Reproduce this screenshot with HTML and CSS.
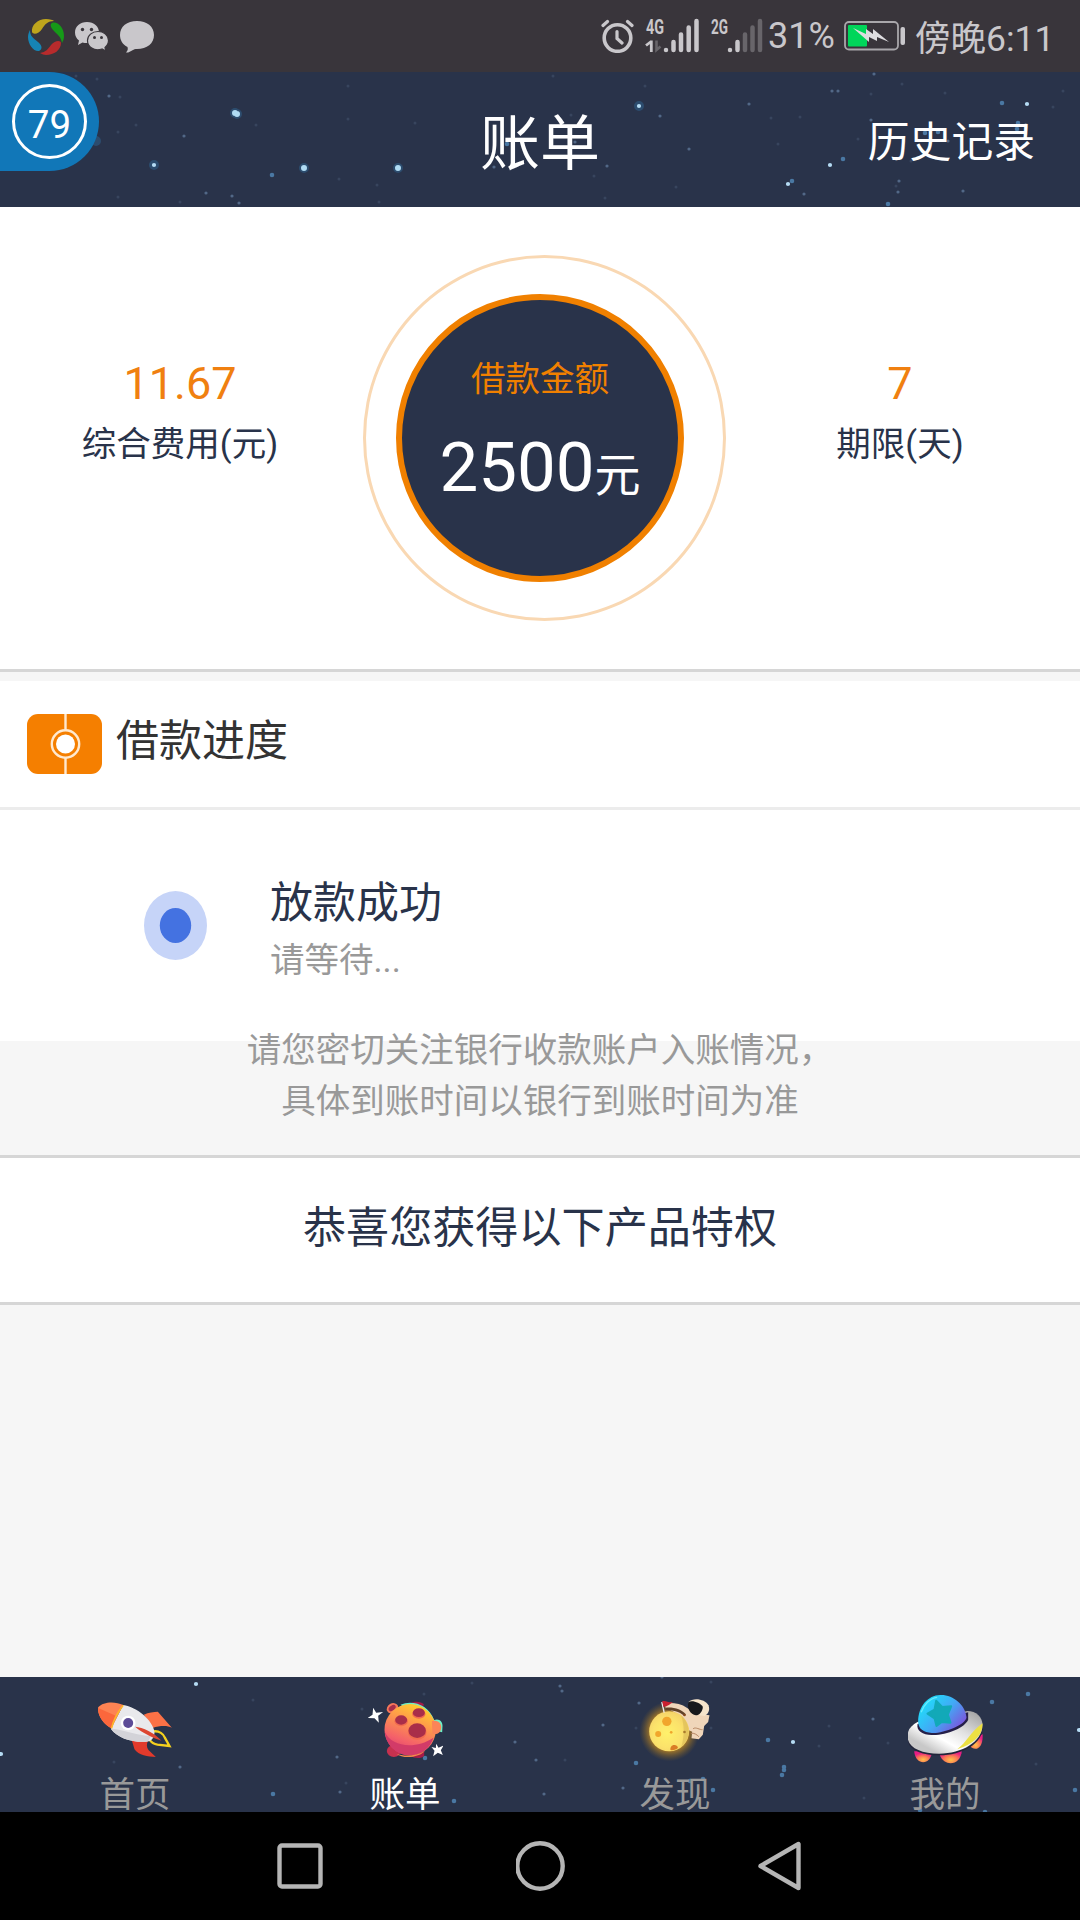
FILE: index.html
```html
<!doctype html>
<html lang="zh-CN">
<head>
  <meta charset="utf-8">
  <title>账单</title>
  <link rel="stylesheet" href="styles.css">
</head>
<body>
<div class="phone">

  <div class="status">
    <div class="status-left">
      <svg class="ico-swirl" viewBox="0 0 36 36">
        <path fill="#bfa51c" d="M4 13C3 6 10 0 18 0c4 0 7 1 8 2-6 0-9 3-12 8-3 5-9 6-10 3z"/>
        <path fill="#169a18" d="M24 4c5-2 12 4 12 13 0 3-1 5-2 7-1-6-4-8-8-12-4-4-4-7-2-8z"/>
        <path fill="#b82b2c" d="M33 24c0 7-7 12-15 12-2 0-4-1-6-2 6-1 8-4 11-8 4-5 10-5 10-2z"/>
        <path fill="#1684b4" d="M11 32C6 33 0 26 0 18c0-3 1-5 2-7 0 6 3 8 8 12 4 3 5 7 1 9z"/>
      </svg>
      <svg class="ico-wechat" viewBox="0 0 34 30">
        <path fill="#c9c7cb" d="M12 0c7 0 12 4.500 12 10.500S19 21 12 21c-2 0-3 0-4.500-.6L3 23l1-4.500C1.500 16.500 0 14 0 10.500 0 4.500 5 0 12 0z"/>
        <path fill="#c9c7cb" stroke="#39353b" stroke-width="1.200" d="M23 9.500c6 0 10.500 4 10.500 9 0 3-1.500 5.300-3.500 7l.7 3.500-3.700-2c-8 2.500-14.500-2-14.500-8.500 0-5 4.500-9 10.500-9z"/>
        <g fill="#39353b"><circle cx="7.500" cy="7.500" r="1.700"/><circle cx="16.500" cy="7.500" r="1.700"/><circle cx="19.500" cy="15.500" r="1.500"/><circle cx="26.500" cy="15.500" r="1.500"/></g>
      </svg>
      <svg class="ico-bubble" viewBox="0 0 34 32">
        <path fill="#c9c7cb" d="M17 0c10 0 17 5.500 17 14S27 28 17 28c-2 0-3 .3-4.500 1.200C10.500 30.500 8 32 6 31.500c2-2 2-3.500 1.500-5.500C2.500 23.500 0 19 0 14 0 5.500 7 0 17 0z"/>
      </svg>
    </div>
    <div class="status-right">
      <svg class="ico-alarm" viewBox="0 0 33 34">
        <g fill="none" stroke="#c9c7cb" stroke-linecap="round">
          <circle cx="16.500" cy="19" r="13.300" stroke-width="3.600"/>
          <path stroke-width="3.200" d="M2 6.500 6.500 2.500M31 6.500 26.500 2.500M16 12.500v7l5 4.500"/>
        </g>
      </svg>
      <svg class="ico-signal" viewBox="0 0 53 34">
        <text class="net" x="0" y="15" textLength="18" lengthAdjust="spacingAndGlyphs">4G</text>
        <path stroke="#c9c7cb" stroke-width="2.800" fill="none" d="M0 26.500l4.500-3.500M5.300 21.500V33"/>
        <path stroke="#68656a" stroke-width="2.600" fill="none" d="M10.500 21.500V31l4-3.500"/>
        <path class="bar" d="M20 31v0M27.500 23v8M35 15.500V31M42.700 8.500V31M50.500 2v29"/>
      </svg>
      <svg class="ico-signal" viewBox="0 0 53 34">
        <text class="net" x="0" y="15" textLength="17" lengthAdjust="spacingAndGlyphs">2G</text>
        <path class="bar" d="M19 31v0M26.500 23v8"/>
        <path class="bar off" d="M34 15.500V31M41.500 8.500V31M49 2v29"/>
      </svg>
      <span class="percent">31%</span>
      <svg class="ico-battery" viewBox="0 0 62 30">
        <rect x="1" y="1" width="53" height="27.500" rx="4" fill="none" stroke="#a9a7ab" stroke-width="1.800"/>
        <rect x="4" y="4" width="19" height="21.500" rx="1" fill="#00d65a"/>
        <path fill="#dedde0" d="M9 7l13 6 0-5 7 5 0-5 16 13-12-5 0 4-8-4 0 5z"/>
        <rect x="56.500" y="6" width="4.500" height="18" rx="2" fill="#c9c7cb"/>
      </svg>
      <span class="clock">傍晚6:11</span>
    </div>
  </div>

  <div class="header">
    <svg class="sky" viewBox="0 0 1080 135">
      <path class="star faint" d="M76 4h0M97 7h0M118 60h0M136 53h0M120 25h0M118 125h0M348 14h0M348 47h0M415 51h0M379 130h0M256 53h0M339 107h0M377 113h0M180 130h0M571 43h0M553 4h0M594 104h0M645 14h0M676 115h0M605 126h0M771 46h0M800 45h0M778 72h0M858 67h0M871 22h0M902 12h0M945 21h0M1053 35h0M1063 19h0M911 89h0M896 114h0"/>
      <path class="star dim" d="M109 24h0M184 64h0M206 121h0M232 124h0M239 131h0M660 44h0M689 77h0M607 94h0M749 32h0M832 19h0M838 19h0M874 2h0M871 48h0M948 69h0M804 122h0M899 109h0M898 120h0M963 119h0M494 95h0M575 70h0"/>
      <path class="star blue" d="M272 103h0M507 72h0M1002 31h0M1018 51h0M1017 57h0M925 61h0M938 60h0M843 87h0M792 109h0M888 132h0"/>
      <path class="star glow" d="M96 69h0M154 93h0M235 41h0M237 42h0M304 96h0M398 96h0M639 34h0"/>
      <path class="star bright" d="M154 93h0M639 34h0M1027 32h0M830 93h0M788 112h0"/>
      <path class="star big" d="M235 41h0M237 42h0M304 96h0M398 96h0"/>
    </svg>
    <div class="badge"><span class="badge-ring">79</span></div>
    <h1>账单</h1>
    <a class="history">历史记录</a>
  </div>

  <div class="summary">
    <div class="fact">
      <div class="fact-value">11.67</div>
      <div class="fact-label">综合费用(元)</div>
    </div>
    <div class="ring">
      <div class="disc">
        <div class="disc-label">借款金额</div>
        <div class="disc-amount">2500<span>元</span></div>
      </div>
    </div>
    <div class="fact">
      <div class="fact-value">7</div>
      <div class="fact-label">期限(天)</div>
    </div>
  </div>

  <div class="section-title">
    <svg class="ico-progress" viewBox="0 0 75 60">
      <rect width="75" height="60" rx="11" fill="#f57f00"/>
      <g fill="none" stroke="#ffe9cf" stroke-width="2.400"><path d="M38.500 0v16M38.500 44v16"/><circle cx="38.500" cy="30" r="13.700"/></g>
      <circle cx="38.500" cy="30" r="9.500" fill="#fff"/>
    </svg>
    <h2>借款进度</h2>
  </div>

  <div class="step">
    <svg class="dot" viewBox="0 0 63 69">
      <ellipse cx="31.500" cy="34.500" rx="31.500" ry="34.500" fill="#c6d4f8"/>
      <ellipse cx="31.500" cy="34.500" rx="15.700" ry="17.500" fill="#4472e1"/>
    </svg>
    <div class="step-text">
      <div class="step-name">放款成功</div>
      <div class="step-note">请等待...</div>
    </div>
  </div>

  <p class="notice">请您密切关注银行收款账户入账情况，<br>具体到账时间以银行到账时间为准</p>

  <div class="privilege">恭喜您获得以下产品特权</div>

  <div class="tabs">
    <svg class="sky" viewBox="0 0 1080 135">
      <path class="star faint" d="M253 23h0M472 6h0M424 17h0M362 32h0M711 5h0M711 51h0M636 51h0M819 69h0M829 49h0M860 61h0M888 66h0M864 121h0M346 106h0M565 83h0M114 85h0M1036 87h0"/>
      <path class="star dim" d="M180 90h0M560 9h0M562 14h0M515 65h0M536 83h0M544 117h0M337 80h0M340 115h0M639 26h0M623 111h0M603 48h0M873 42h0M662 0h0"/>
      <path class="star blue" d="M273 117h0M454 124h0M425 81h0M636 86h0M713 113h0M703 102h0M690 104h0M768 63h0M784 90h0M784 93h0M782 98h0M992 25h0M1028 17h0M1075 113h0M920 133h0M985 135h0"/>
      <path class="star bright" d="M196 7h0M793 65h0M1079 53h0M1 77h0"/>
    </svg>
    <div class="tab">
      <svg class="tab-icon" viewBox="112.5 66 225 225">
        <path fill="#fb7146" d="M250 134C264 127 280 125 292 125L334 173C322 167 300 166 276 174z"/>
        <path fill="#e23a2c" d="M213 208 262 213C258 224 258 232 264 240L286 261C262 260 234 256 222 238z"/>
        <path fill="none" stroke="#f4d01e" stroke-width="7" d="M280 184c16-2 29 8 33 19l14 25-36-4c-12-2-20-9-24-15"/>
        <path fill="#e9e9ec" d="M188 105c42 6 88 46 94 80 0 18-9 30-26 30-42 2-84-10-105-39z"/>
        <path fill="#d3d3d8" d="M151 176c24-1 70 18 119 22-2 10-6 17-14 17-42 2-84-10-105-39z"/>
        <path fill="#fd8353" d="M113 112c15-18 52-18 75-7l-35 70c-22-10-44-39-40-63z"/>
        <path fill="#fb673c" d="M113 114 166 137 153 175c-22-10-42-37-40-61z"/>
        <path fill="none" stroke="#fdb62b" stroke-width="5" d="M188 106c-14 18-29 43-35 69"/>
        <circle cx="203" cy="159" r="22" fill="#fff"/>
        <circle cx="203" cy="159" r="15" fill="#5d4c97"/>
        <path fill="#dd4530" d="M224 170C246 172 282 188 303 212 284 206 246 190 224 170z"/>
      </svg>
      <span>首页</span>
    </div>
    <div class="tab active">
      <svg class="tab-icon" viewBox="112.5 66 225 225">
        <defs>
          <linearGradient id="planet" x1=".75" y1="0" x2=".35" y2="1">
            <stop offset="0" stop-color="#ffd629"/><stop offset=".35" stop-color="#ff9d49"/><stop offset=".75" stop-color="#f4606a"/><stop offset="1" stop-color="#d83c6e"/>
          </linearGradient>
        </defs>
        <path fill="#a51c49" d="M240 101c8-8 32-8 40 2l-4 14zM241 258c10 8 34 8 40-1v-12z"/>
        <ellipse cx="190" cy="243" rx="21" ry="18" fill="#c6314f"/>
        <path fill="#6ef0c8" d="M210 104c36-16 84 0 101 46 14-6 25 4 25 17l-1 20-26-6z"/>
        <ellipse cx="186" cy="115" rx="18" ry="15" fill="#f5775a" transform="rotate(-30 186 115)"/>
        <ellipse cx="185" cy="114" rx="12" ry="7" fill="#a72f4a" transform="rotate(-35 185 114)"/>
        <circle cx="239" cy="179" r="77" fill="url(#planet)"/>
        <path fill="#fb8458" d="M304 153c15-4 29 4 28 20s-14 22-26 18z"/>
        <path fill="#d23b68" d="M163 186c20 44 90 54 146 17-12 34-40 54-72 53-38-1-70-30-74-70z"/>
        <path fill="#f58a4b" d="M198 251c20 8 58 9 86-9-14 18-64 28-86 9z"/>
        <g fill="#f26a50"><ellipse cx="212" cy="154" rx="20" ry="15"/><ellipse cx="265" cy="132" rx="20" ry="14"/><ellipse cx="260" cy="186" rx="28" ry="23"/></g>
        <g fill="#a92e49"><ellipse cx="212" cy="150" rx="18" ry="14"/><ellipse cx="265" cy="128" rx="18" ry="13"/><ellipse cx="260" cy="182" rx="26" ry="22"/></g>
        <path fill="#fff" d="M128 113 137 128 158 126 143 137 145 158 132 145 111 144 126 134zM317 221l7 12 15-6-8 14 6 14-15-7-14 11 4-17-9-11 13 3z"/>
      </svg>
      <span>账单</span>
    </div>
    <div class="tab">
      <svg class="tab-icon" viewBox="112.5 66 225 225">
        <defs>
          <radialGradient id="halo"><stop offset=".6" stop-color="#d0911f" stop-opacity=".85"/><stop offset="1" stop-color="#8a6520" stop-opacity="0"/></radialGradient>
          <radialGradient id="moon" cx=".45" cy=".55" r=".6"><stop offset="0" stop-color="#fff16b"/><stop offset=".6" stop-color="#fbe26b"/><stop offset="1" stop-color="#f3cf68"/></radialGradient>
        </defs>
        <circle cx="207" cy="184" r="90" fill="url(#halo)"/>
        <path fill="#f0d6ba" d="M192 100c24-2 48 0 68 14l26 16 41 6-4 20-12 12-4 26-12 14-22-3 2-20-24-10c0-30-20-48-55-60z"/>
        <path fill="#604229" d="M196 113c26-2 48 6 60 20l-4 5c-16-14-36-18-58-18z"/>
        <circle cx="206" cy="184" r="60" fill="url(#moon)"/>
        <path fill="#d9b955" opacity=".6" d="M242 136c26 24 34 66 0 96 10-32 10-64 0-96z"/>
        <path fill="#f6e4cb" d="M264 96c14-14 50-9 60 10 5 14 0 26-12 32l-22-4z"/>
        <path fill="#17181c" d="M264 96c12-6 34 2 43 14 0 14-11 26-21 26-16-3-28-20-22-40z"/>
        <path fill="none" stroke="#b78763" stroke-width="3" d="M278 176c8-6 20 4 28 3M271 190c10-2 18 4 24 10"/>
        <g fill="#f1a62c"><circle cx="199" cy="154" r="14"/><circle cx="173" cy="192" r="9"/><circle cx="212" cy="187" r="4"/></g>
        <path fill="#d97d26" d="M210 240c-2-10 6-17 13-15 7 1 10 6 9 9-6 5-13 8-22 6z"/>
        <circle cx="252" cy="186" r="4" fill="#a97a2c"/><circle cx="252" cy="135" r="4" fill="#84471f"/>
        <path stroke="#eee" stroke-width="4" d="M184 96 191 128"/>
        <path fill="#c9202f" d="M185 94c10-4 16 4 32 3-8 5-14 12-28 14z"/>
      </svg>
      <span>发现</span>
    </div>
    <div class="tab">
      <svg class="tab-icon" viewBox="202.5 66 225 225">
        <defs>
          <linearGradient id="dome" x1="0" y1=".2" x2="1" y2=".9"><stop offset="0" stop-color="#19e6fa"/><stop offset=".5" stop-color="#43a8f5"/><stop offset="1" stop-color="#8b3fd6"/></linearGradient>
          <linearGradient id="hull" x1="0" y1="1" x2="1" y2="0"><stop offset=".2" stop-color="#c8c8c8"/><stop offset=".4" stop-color="#fff"/><stop offset=".62" stop-color="#e2e2e2"/><stop offset="1" stop-color="#999"/></linearGradient>
          <radialGradient id="jet" cx=".5" cy=".75" r=".6"><stop offset="0" stop-color="#ffc24b"/><stop offset=".5" stop-color="#fb7d52"/><stop offset="1" stop-color="#e81d85"/></radialGradient>
        </defs>
        <path fill="url(#jet)" d="M221 244h54c-4 44-50 44-54 0z"/>
        <path fill="url(#jet)" d="M298 256l66-16c-2 48-52 52-66 16z"/>
        <path fill="url(#jet)" d="M384 222l42-30c4 44-24 58-42 30z"/>
        <path fill="#22253a" d="M201 204c0-38 30-54 60-54l120-27c28 0 46 22 46 48 0 50-62 85-130 85-56 0-96-18-96-52z"/>
        <path fill="url(#hull)" d="M201 198c0-20 12-32 30-42l150-33c26 0 45 18 45 42 0 50-62 86-130 86-56 0-95-19-95-53z"/>
        <path fill="#ece042" d="M426 160c2 36-28 62-76 78 28-20 38-50 76-78z"/>
        <path fill="#262049" d="M231 162c-4 22 16 32 42 33 44 2 100-22 110-46l0-22z"/>
        <path fill="url(#dome)" d="M233 156c0-48 30-80 66-81 38-2 76 30 79 67-2 24-74 50-104 47-25-2-40-12-41-33z"/>
        <path fill="none" stroke="#88f3ff" stroke-width="4" opacity=".7" d="M242 127c8-24 26-42 48-45"/>
        <path fill="#12a9b8" stroke="#12a9b8" stroke-width="6" stroke-linejoin="round" d="M287 92 305 111 332 109 322 134 330 158 304 156 288 168 282 145 261 131 282 119z"/>
      </svg>
      <span>我的</span>
    </div>
  </div>

  <div class="navbar">
    <svg viewBox="0 0 49 54"><rect x="3.500" y="4.500" width="41" height="41" rx="2.500"/></svg>
    <svg viewBox="0 0 49 54"><circle cx="24" cy="25" r="22.700"/></svg>
    <svg viewBox="0 0 49 54"><path d="M42.500 3v44L4.500 25z"/></svg>
  </div>

</div>
</body>
</html>
```
FILE: styles.css
```css
* {
  box-sizing: border-box;
}
body {
  margin: 0;
  background: #f6f6f6;
  color: #29334a;
  font-family: Roboto, "Noto Sans CJK SC", sans-serif;
}
h1, h2, p {
  margin: 0;
  font-weight: normal;
}
svg {
  display: block;
  flex: none;
}
.phone {
  width: 1080px;
  height: 1920px;
  display: flex;
  flex-direction: column;
  overflow: hidden;
}

/* system status bar */
.status {
  height: 72px;
  flex: none;
  display: flex;
  justify-content: space-between;
  background: #39353b;
  color: #c9c7cb;
}
.status-left,
.status-right {
  display: flex;
  align-items: flex-start;
}
.status-left {
  padding: 19px 0 0 28px;
}
.status-right {
  padding: 19px 27px 0 0;
}
.ico-swirl {
  width: 36px;
  height: 36px;
}
.ico-wechat {
  width: 34px;
  height: 30px;
  margin: 3px 0 0 11px;
}
.ico-bubble {
  width: 34px;
  height: 32px;
  margin: 2px 0 0 11px;
}
.ico-alarm {
  width: 33px;
  height: 34px;
}
.ico-signal {
  width: 53px;
  height: 34px;
  margin-left: 12px;
  overflow: visible;
}
.net {
  font: bold 21px Roboto, sans-serif;
  fill: #c9c7cb;
}
.bar {
  fill: none;
  stroke: #c9c7cb;
  stroke-width: 4.5px;
  stroke-linecap: round;
}
.off {
  stroke: #68656a;
}
.percent {
  width: 67px;
  margin: -3px 0 0 4px;
  font-size: 36px;
  line-height: 40px;
}
.ico-battery {
  width: 62px;
  height: 30px;
  margin: 2px 0 0 9px;
}
.clock {
  width: 138px;
  margin: -1px 0 0 9px;
  font-size: 35.5px;
  line-height: 42px;
  white-space: nowrap;
}

/* starry bars */
.header,
.tabs {
  position: relative;
  height: 135px;
  flex: none;
  background: #29334a;
}
.sky {
  position: absolute;
  left: 0;
  top: 0;
  width: 1080px;
  height: 135px;
}
.star {
  fill: none;
  stroke-linecap: round;
}
.faint {
  stroke: #38455e;
  stroke-width: 3px;
}
.dim {
  stroke: #526887;
  stroke-width: 3.2px;
}
.blue {
  stroke: #4a78a3;
  stroke-width: 4.6px;
}
.glow {
  stroke: #2f6592;
  stroke-width: 10px;
  opacity: .5;
}
.bright {
  stroke: #b5dcf4;
  stroke-width: 4.2px;
}
.big {
  stroke: #b0dcf4;
  stroke-width: 6px;
}

.header {
  display: flex;
  justify-content: center;
  color: #fff;
}
.header h1 {
  position: relative;
  font-size: 60px;
  line-height: 146px;
}
.history {
  position: absolute;
  right: 45px;
  top: 0;
  font-size: 41.8px;
  line-height: 141px;
}
.badge {
  position: absolute;
  left: 0;
  top: 0;
  width: 99px;
  height: 99px;
  padding: 12px;
  background: #1177b8;
  border-radius: 0 50px 50px 0;
}
.badge-ring {
  display: block;
  width: 75px;
  height: 75px;
  border: 3px solid #fff;
  border-radius: 50%;
  font-size: 38.5px;
  line-height: 75px;
  text-align: center;
}

/* loan summary */
.summary {
  height: 465px;
  flex: none;
  display: grid;
  grid-template-columns: 360px 360px 360px;
  background: #fff;
  border-bottom: 3px solid #d6d6d6;
}
.fact {
  padding-top: 146px;
  text-align: center;
}
.fact-value {
  color: #f08010;
  font-size: 45px;
  line-height: 61px;
}
.fact-label {
  font-size: 34.5px;
  line-height: 60px;
}
.ring {
  width: 363px;
  height: 366px;
  margin: 48px 0 0 3px;
  padding: 36px 0 0 30px;
  border: 3px solid #f9d8b3;
  border-radius: 50%;
}
.disc {
  width: 288px;
  height: 288px;
  padding-top: 49px;
  background: #29334a;
  border: 6px solid #f08000;
  border-radius: 50%;
  text-align: center;
}
.disc-label {
  color: #f08000;
  font-size: 34.5px;
  line-height: 60px;
}
.disc-amount {
  color: #fff;
  font-size: 69px;
  line-height: 118px;
}
.disc-amount span {
  font-size: 46px;
  line-height: 1;
}

/* progress */
.section-title {
  height: 129px;
  flex: none;
  margin-top: 9px;
  padding: 33px 27px 0;
  display: flex;
  background: #fff;
  border-bottom: 3px solid #ececec;
}
.ico-progress {
  width: 75px;
  height: 60px;
}
.section-title h2 {
  margin-left: 14px;
  color: #333;
  font-size: 43px;
  line-height: 54px;
}
.step {
  height: 231px;
  flex: none;
  padding: 59px 0 0 144px;
  display: flex;
  background: #fff;
}
.dot {
  width: 63px;
  height: 69px;
  margin-top: 22px;
}
.step-text {
  margin-left: 63px;
}
.step-name {
  font-size: 43px;
  line-height: 68px;
}
.step-note {
  color: #999;
  font-size: 34.5px;
  line-height: 46px;
}
/* first line overlaps the white block above */
.notice {
  height: 130px;
  flex: none;
  margin-top: -16px;
  color: #999;
  font-size: 34.5px;
  line-height: 51px;
  text-align: center;
}
.privilege {
  height: 150px;
  flex: none;
  background: #fff;
  border: solid #d6d6d6;
  border-width: 3px 0;
  font-size: 43.1px;
  line-height: 141px;
  text-align: center;
}

/* bottom tabs */
.tabs {
  margin-top: auto;
  display: grid;
  grid-template-columns: repeat(4, 1fr);
}
.tab {
  position: relative;
  padding-top: 15px;
  display: flex;
  flex-direction: column;
  align-items: center;
  color: #999;
  font-size: 35.5px;
  line-height: 56px;
}
.active {
  color: #fff;
}
.tab-icon {
  width: 75px;
  height: 75px;
}

/* system navigation */
.navbar {
  height: 108px;
  flex: none;
  padding-top: 29px;
  display: flex;
  justify-content: center;
  gap: 191px;
  background: #000;
}
.navbar svg {
  width: 49px;
  height: 54px;
  fill: none;
  stroke: #b5b5b5;
  stroke-width: 4.4px;
  stroke-linejoin: round;
}
```
